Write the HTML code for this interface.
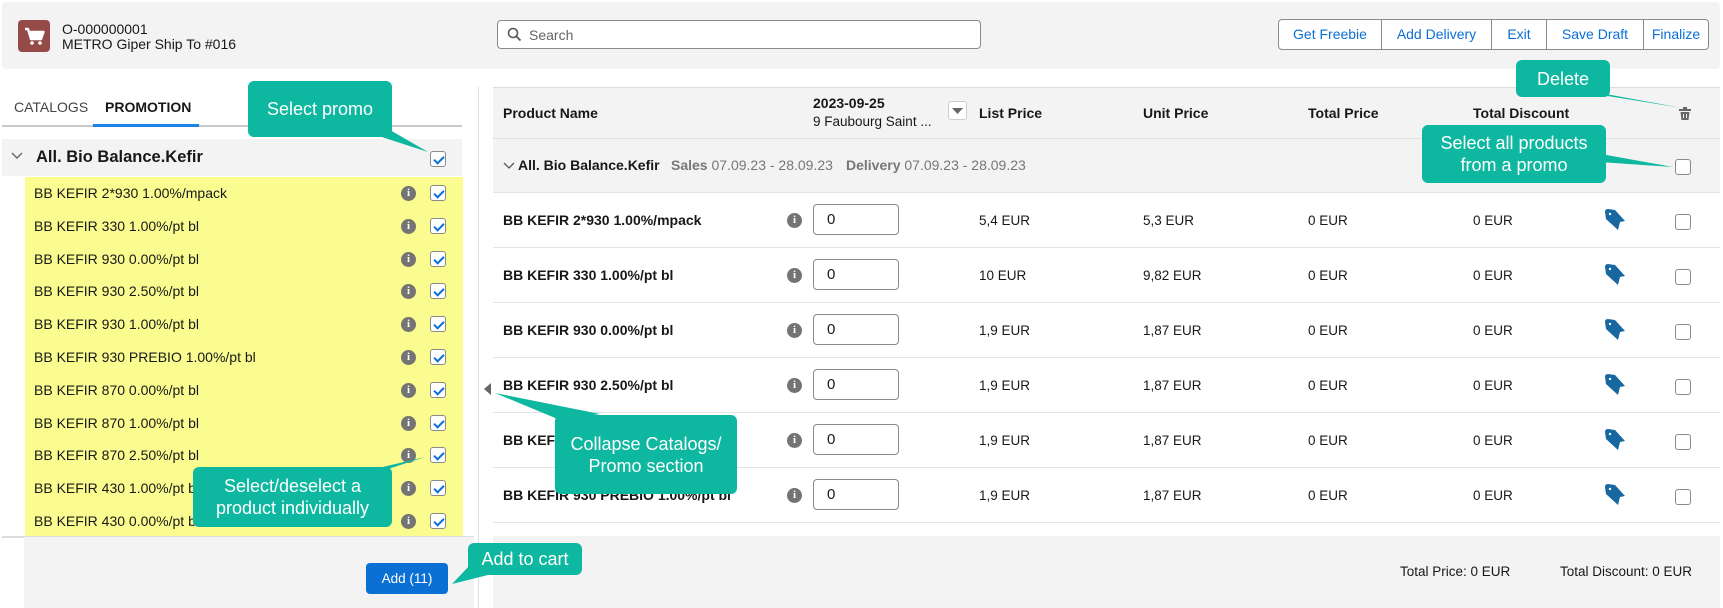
<!DOCTYPE html>
<html><head><meta charset="utf-8"><style>
*{box-sizing:border-box;margin:0;padding:0}
body{width:1723px;height:608px;position:relative;overflow:hidden;background:#fff;font-family:"Liberation Sans",Arial,sans-serif;color:#181818}
.a{position:absolute}
.hdr{left:2px;top:2px;width:1718px;height:67px;background:#f3f3f3;border-radius:4px}
.cb{position:absolute;width:16px;height:16px;border:1px solid #8a8a8a;border-radius:3px;background:#fff}
.cb.on::after{content:"";position:absolute;left:5px;top:2px;width:4px;height:8px;border:solid #0b6fd6;border-width:0 2px 2px 0;transform:rotate(45deg)}
.info{position:absolute;width:15px;height:15px;border-radius:50%;background:#747474;color:#fff;font:bold 11px "Liberation Serif",serif;text-align:center;line-height:15px}
.yrow{position:absolute;left:25px;width:438px;height:32.8px;background:#fbfc8f;font-size:14px;line-height:32.8px;padding-left:9px}
.call{position:absolute;background:#0eb79f;color:#fff;font-size:18px;text-align:center;border-radius:6px;display:flex;align-items:center;justify-content:center;line-height:22px}
.th{position:absolute;font-size:14px;font-weight:bold;top:105px}
.prow{position:absolute;left:493px;width:1227px;height:55px;border-top:1px solid #e5e5e5;font-size:14px}
.prow .n{position:absolute;left:10px;top:19px;font-weight:bold}
.prow .in{position:absolute;left:320px;top:11px;width:86px;height:31px;border:1px solid #8a8a8a;border-radius:4px;padding-left:13px;line-height:29px;font-size:15px}
.prow .c{position:absolute;top:20px;font-size:13.5px}
.bt{text-align:center;line-height:29px;border-right:1px solid #8a8a8a}
</style></head><body>
<div class="a hdr"></div>
<div class="a" style="left:18px;top:20px;width:32px;height:32px;background:#944b47;border-radius:4px">
<svg width="32" height="32" viewBox="0 0 32 32"><path d="M7 9h3l3 10h10l2.5-7H12" fill="none" stroke="#fff" stroke-width="2.4" stroke-linejoin="round"/><path d="M12 12h13l-2.5 7H13z" fill="#fff"/><circle cx="14" cy="23" r="1.8" fill="#fff"/><circle cx="22" cy="23" r="1.8" fill="#fff"/></svg></div>
<div class="a" style="left:62px;top:22px;font-size:14px;line-height:15px">O-000000001<br>METRO Giper Ship To #016</div>
<div class="a" style="left:497px;top:20px;width:484px;height:29px;border:1px solid #8a8a8a;border-radius:4px;background:#fff"></div>
<svg class="a" style="left:507px;top:27px" width="15" height="15" viewBox="0 0 15 15"><circle cx="6" cy="6" r="4.5" fill="none" stroke="#555" stroke-width="1.6"/><path d="M9.5 9.5l4 4" stroke="#555" stroke-width="1.8"/></svg>
<div class="a" style="left:529px;top:27px;font-size:14px;color:#666">Search</div>
<div class="a" style="left:1278px;top:19px;width:431px;height:31px;border:1px solid #8a8a8a;border-radius:4px;background:#fff;display:flex;font-size:14px;color:#0b6fd6">
<div class="bt" style="width:103px">Get Freebie</div>
<div class="bt" style="width:110px">Add Delivery</div>
<div class="bt" style="width:55px">Exit</div>
<div class="bt" style="width:97px">Save Draft</div>
<div class="bt" style="flex:1;border:0">Finalize</div></div>

<!-- left tabs -->
<div class="a" style="left:14px;top:99px;font-size:14px;color:#444">CATALOGS</div>
<div class="a" style="left:105px;top:99px;font-size:14px;font-weight:bold">PROMOTION</div>
<div class="a" style="left:2px;top:125px;width:460px;height:2px;background:#c9c9c9"></div>
<div class="a" style="left:93px;top:124px;width:106px;height:3px;background:#1b80e8"></div>
<div class="a" style="left:2px;top:139px;width:460px;height:37px;background:#f3f3f3"></div>
<svg class="a" style="left:11px;top:152px" width="12" height="8"><path d="M1 1l5 5 5-5" fill="none" stroke="#666" stroke-width="1.4"/></svg>
<div class="a" style="left:36px;top:148px;font-size:16.5px;font-weight:bold">All. Bio Balance.Kefir</div>
<div class="cb on" style="left:430px;top:151px"></div>

<div class="yrow" style="top:177px">BB KEFIR 2*930 1.00%/mpack</div>
<div class="yrow" style="top:209.8px">BB KEFIR 330 1.00%/pt bl</div>
<div class="yrow" style="top:242.6px">BB KEFIR 930 0.00%/pt bl</div>
<div class="yrow" style="top:275.4px">BB KEFIR 930 2.50%/pt bl</div>
<div class="yrow" style="top:308.2px">BB KEFIR 930 1.00%/pt bl</div>
<div class="yrow" style="top:341px">BB KEFIR 930 PREBIO 1.00%/pt bl</div>
<div class="yrow" style="top:373.8px">BB KEFIR 870 0.00%/pt bl</div>
<div class="yrow" style="top:406.6px">BB KEFIR 870 1.00%/pt bl</div>
<div class="yrow" style="top:439.4px">BB KEFIR 870 2.50%/pt bl</div>
<div class="yrow" style="top:472.2px">BB KEFIR 430 1.00%/pt bl</div>
<div class="yrow" style="top:505px;height:31px">BB KEFIR 430 0.00%/pt bl</div>
<div id="lic"></div>
<script>
var h="";for(var i=0;i<11;i++){var y=177+i*32.8;h+='<div class="info" style="left:401px;top:'+(y+9)+'px">i</div><div class="cb on" style="left:430px;top:'+(y+8)+'px"></div>';}
document.getElementById("lic").innerHTML=h;
</script>
<div class="a" style="left:2px;top:536px;width:472px;height:2px;background:#ddd"></div>
<div class="a" style="left:24px;top:537px;width:450px;height:71px;background:#f3f3f3"></div>
<div class="a" style="left:366px;top:563px;width:82px;height:31px;background:#0b70d4;border-radius:4px;color:#fff;font-size:13.5px;text-align:center;line-height:31px">Add (11)</div>
<div class="a" style="left:478px;top:87px;width:1px;height:521px;background:#ddd"></div>
<svg class="a" style="left:484px;top:383px" width="8" height="12"><path d="M7 0v12L0 6z" fill="#666"/></svg>

<!-- table -->
<div class="a" style="left:493px;top:87px;width:1227px;height:105px;background:#f3f3f3;border-top:1px solid #ddd"></div>
<div class="a" style="left:493px;top:138px;width:1227px;height:1px;background:#e0e0e0"></div>
<div class="th" style="left:503px">Product Name</div>
<div class="a" style="left:813px;top:95px;font-size:14px;font-weight:bold">2023-09-25</div>
<div class="a" style="left:813px;top:114px;font-size:13.5px">9 Faubourg Saint ...</div>
<div class="a" style="left:948px;top:101px;width:19px;height:19px;border:1px solid #ccc;border-radius:3px;background:#fff"></div>
<svg class="a" style="left:952px;top:108px" width="11" height="7"><path d="M0 0h11L5.5 6z" fill="#666"/></svg>
<div class="th" style="left:979px">List Price</div>
<div class="th" style="left:1143px">Unit Price</div>
<div class="th" style="left:1308px">Total Price</div>
<div class="th" style="left:1473px">Total Discount</div>
<svg class="a" style="left:1679px;top:107px" width="12" height="13" viewBox="0 0 12 13"><rect x="4" y="0" width="4" height="2" fill="#666"/><rect x="0" y="2" width="12" height="2" fill="#666"/><path d="M1.5 5h9l-1 8h-7z" fill="#666"/><rect x="4" y="7" width="1" height="4" fill="#eee"/><rect x="7" y="7" width="1" height="4" fill="#eee"/></svg>
<svg class="a" style="left:503px;top:162px" width="12" height="8"><path d="M1 1l5 5 5-5" fill="none" stroke="#555" stroke-width="1.3"/></svg>
<div class="a" style="left:518px;top:157px;font-size:14px;font-weight:bold">All. Bio Balance.Kefir</div>
<div class="a" style="left:671px;top:157px;font-size:14px;color:#777"><b>Sales</b> 07.09.23 - 28.09.23</div>
<div class="a" style="left:846px;top:157px;font-size:14px;color:#777"><b>Delivery</b> 07.09.23 - 28.09.23</div>
<div class="cb" style="left:1675px;top:159px"></div>
<div id="rows"></div>
<script>
var d=[["BB KEFIR 2*930 1.00%/mpack","5,4 EUR","5,3 EUR"],["BB KEFIR 330 1.00%/pt bl","10 EUR","9,82 EUR"],["BB KEFIR 930 0.00%/pt bl","1,9 EUR","1,87 EUR"],["BB KEFIR 930 2.50%/pt bl","1,9 EUR","1,87 EUR"],["BB KEFIR 930 1.00%/pt bl","1,9 EUR","1,87 EUR"],["BB KEFIR 930 PREBIO 1.00%/pt bl","1,9 EUR","1,87 EUR"]];
var s="";d.forEach(function(r,i){var y=192+i*55;s+='<div class="prow" style="top:'+y+'px"><div class="n">'+r[0]+'</div><div class="info" style="left:294px;top:20px">i</div><div class="in">0</div><div class="c" style="left:486px">'+r[1]+'</div><div class="c" style="left:650px">'+r[2]+'</div><div class="c" style="left:815px">0 EUR</div><div class="c" style="left:980px">0 EUR</div><svg style="position:absolute;left:1110px;top:15px" width="25" height="24" viewBox="0 0 25 24"><path d="M2 4Q2 1 5 1L12 2L22 13L17 14L15 22L3 11Z" fill="#1767a0"/><circle cx="7" cy="6" r="1.2" fill="#fff"/></svg><div class="cb" style="left:1182px;top:21px"></div></div>';});
document.getElementById("rows").innerHTML=s;
</script>
<div class="a" style="left:493px;top:522px;width:1227px;height:1px;background:#e5e5e5"></div>
<div class="a" style="left:493px;top:536px;width:1227px;height:72px;background:#f3f3f3"></div>
<div class="a" style="left:1400px;top:564px;font-size:13.5px">Total Price: 0 EUR</div>
<div class="a" style="left:1560px;top:564px;font-size:13.5px">Total Discount: 0 EUR</div>

<!-- callouts -->
<svg class="a" style="left:0;top:0" width="1723" height="608">
<g fill="#0eb79f">
<path d="M360 130L390 130L428 152Z"/>
<path d="M1570 90L1595 92L1682 108Z"/>
<path d="M1570 160L1590 152L1673 167Z"/>
<path d="M560 420L600 414L495 393Z"/>
<path d="M470 565L500 572L452 584Z"/>
<path d="M370 470L385 470L425 457Z"/>
</g></svg>
<div class="call" style="left:248px;top:81px;width:144px;height:56px">Select promo</div>
<div class="call" style="left:1516px;top:60px;width:94px;height:37px">Delete</div>
<div class="call" style="left:1422px;top:125px;width:184px;height:58px">Select all products<br>from a promo</div>
<div class="call" style="left:555px;top:415px;width:182px;height:79px">Collapse Catalogs/<br>Promo section</div>
<div class="call" style="left:468px;top:543px;width:114px;height:32px">Add to cart</div>
<div class="call" style="left:193px;top:467px;width:199px;height:60px">Select/deselect a<br>product individually</div>
</body></html>
